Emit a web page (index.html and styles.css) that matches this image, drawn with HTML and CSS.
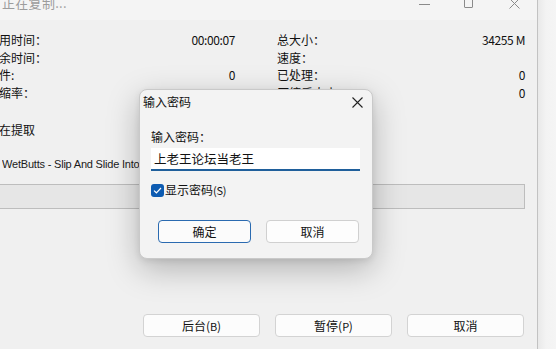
FILE: index.html
```html
<!DOCTYPE html>
<html lang="zh-CN">
<head>
<meta charset="utf-8">
<title>正在复制</title>
<link rel="stylesheet" href="styles.css">
</head>
<body>
<div class="desk">
  <div class="window">
    <div class="titlebar">
      <span class="title">正在复制...</span>
      <div class="controls">
        <span class="ctl ctl-min"></span>
        <span class="ctl ctl-max"></span>
        <svg class="ctl-close" width="11" height="11" viewBox="0 0 11 11"><path d="M0.5 0.5 L10.5 10.5 M10.5 0.5 L0.5 10.5" stroke="#8a8a8a" stroke-width="1" fill="none"/></svg>
      </div>
    </div>
    <div class="stats">
      <div class="stat"><span>已用时间：</span><span class="num">00:00:07</span></div>
      <div class="stat"><span>总大小：</span><span class="num">34255 M</span></div>
      <div class="stat"><span>剩余时间：</span><span class="num"></span></div>
      <div class="stat"><span>速度：</span><span class="num"></span></div>
      <div class="stat"><span>文件:</span><span class="num">0</span></div>
      <div class="stat"><span>已处理：</span><span class="num">0</span></div>
      <div class="stat"><span>压缩率：</span><span class="num"></span></div>
      <div class="stat"><span>压缩后大小：</span><span class="num">0</span></div>
    </div>
    <div class="status">正在提取</div>
    <div class="file">WetButts - Slip And Slide Into Pool Party.mp4</div>
    <div class="progress"></div>
    <div class="actions">
      <button class="btn">后台(<span class="lat">B</span>)</button>
      <button class="btn">暂停(<span class="lat">P</span>)</button>
      <button class="btn">取消</button>
    </div>
  </div>
  <div class="outside"></div>
</div>

<div class="dialog">
  <div class="dlg-title">
    <span>输入密码</span>
    <svg class="dlg-close" width="11" height="11" viewBox="0 0 11 11"><path d="M0.5 0.5 L10.5 10.5 M10.5 0.5 L0.5 10.5" stroke="#222" stroke-width="1.1" fill="none"/></svg>
  </div>
  <div class="dlg-body">
    <div class="dlg-label">输入密码：</div>
    <div class="input">上老王论坛当老王</div>
    <label class="check">
      <span class="box"><svg width="9" height="7" viewBox="0 0 9 7"><path d="M1 3.6 L3.4 5.8 L8 1" stroke="#fff" stroke-width="1.2" fill="none"/></svg></span>
      <span>显示密码<span class="lat">(S)</span></span>
    </label>
    <div class="dlg-actions">
      <button class="dbtn primary">确定</button>
      <button class="dbtn">取消</button>
    </div>
  </div>
</div>
</body>
</html>
```

FILE: styles.css
```css
html, body {
  margin: 0;
  padding: 0;
}
body {
  width: 556px;
  height: 349px;
  overflow: hidden;
  position: relative;
  background: #f3f3f3;
  font-family: "Segoe UI", "Noto Sans CJK SC", "Noto Sans", sans-serif;
  font-size: 12px;
  color: #111;
}
.desk {
  display: flex;
  height: 349px;
}
.window {
  width: 537px;
  height: 349px;
  flex: none;
  background: #f0f0f0;
  border-right: 1px solid #c2c2c2;
  overflow: hidden;
  display: flex;
  flex-direction: column;
}
.outside {
  flex: 1;
  background: linear-gradient(to right, #e9e9e9, #f3f3f3 8px, #f5f5f5);
}
.titlebar {
  height: 20px;
  flex: none;
  background: #f4f4f4;
  display: flex;
  justify-content: space-between;
  overflow: hidden;
}
.title {
  margin: -6px 0 0 2px;
  color: #9c9c9c;
  font-size: 13px;
  line-height: 18px;
  letter-spacing: 0.3px;
}
.controls {
  display: flex;
  align-items: flex-start;
  margin-right: 17px;
}
.ctl-min {
  width: 11px;
  height: 1px;
  background: #8a8a8a;
  margin-top: 4px;
}
.ctl-max {
  width: 9px;
  height: 10px;
  box-sizing: border-box;
  border: 1px solid #8a8a8a;
  border-radius: 1px;
  margin: -2px 0 0 34px;
}
.ctl-close {
  margin: -2px 0 0 36px;
}
.stats {
  margin: 11px 0 0 -13px;
  display: grid;
  grid-template-columns: 248px 248px;
  column-gap: 42px;
  line-height: 17.6px;
}
.stat {
  display: flex;
  justify-content: space-between;
  white-space: nowrap;
}
.num {
  letter-spacing: -0.4px;
}
.status {
  margin: 20px 0 0 -13px;
  line-height: 18px;
}
.file {
  margin: 16px 0 0 2px;
  width: 137px;
  overflow: hidden;
  line-height: 18px;
  white-space: nowrap;
  font-family: "Liberation Sans", "Noto Sans CJK SC", sans-serif;
  font-size: 11px;
  letter-spacing: -0.2px;
  color: #1a1a1a;
}
.progress {
  margin: 11px 0 0 -2px;
  width: 527px;
  height: 25px;
  box-sizing: border-box;
  background: #e6e6e6;
  border: 1px solid #bdbdbd;
}
.actions {
  margin: 105px 0 0 143px;
  display: flex;
  gap: 15px;
}
.btn {
  width: 117px;
  height: 23px;
  padding: 0;
  box-sizing: border-box;
  border: 1px solid #d3d3d3;
  border-radius: 4px;
  background: #fcfcfc;
  font: inherit;
  font-size: 12px;
  color: #111;
}
.lat {
  font-size: 11px;
  letter-spacing: -0.3px;
}
.dialog {
  position: absolute;
  left: 139px;
  top: 89px;
  width: 234px;
  height: 170px;
  box-sizing: border-box;
  background: #f3f3f3;
  border: 1px solid #c9c9c9;
  border-radius: 8px;
  box-shadow: 0 10px 32px rgba(0, 0, 0, 0.26), 0 2px 6px rgba(0, 0, 0, 0.08);
}
.dlg-title {
  height: 24px;
  display: flex;
  align-items: center;
  justify-content: space-between;
  padding: 0 9px 0 3px;
  line-height: 16px;
}
.dlg-body {
  padding: 0 12px 0 11px;
}
.dlg-label {
  margin-top: 15px;
  line-height: 16px;
}
.input {
  margin-top: 3px;
  width: 209px;
  height: 23px;
  box-sizing: border-box;
  background: #fff;
  border-bottom: 2px solid #1f5f9b;
  padding: 0 3px;
  font-size: 12.5px;
  line-height: 21px;
}
.check {
  margin-top: 12px;
  display: flex;
  align-items: center;
  gap: 1px;
  height: 14px;
  line-height: 14px;
}
.box {
  width: 13px;
  height: 13px;
  border-radius: 3px;
  background: #0d5bb1;
  display: flex;
  align-items: center;
  justify-content: center;
}
.dlg-actions {
  margin: 23px 0 0 7px;
  display: flex;
  gap: 15px;
}
.dbtn {
  width: 93px;
  height: 23px;
  padding: 0;
  box-sizing: border-box;
  border: 1px solid #d0d0d0;
  border-radius: 4px;
  background: #fdfdfd;
  font: inherit;
  font-size: 12px;
  color: #111;
}
.dbtn.primary {
  border-color: #2a6ab0;
  background: #fbfbfb;
}
```
